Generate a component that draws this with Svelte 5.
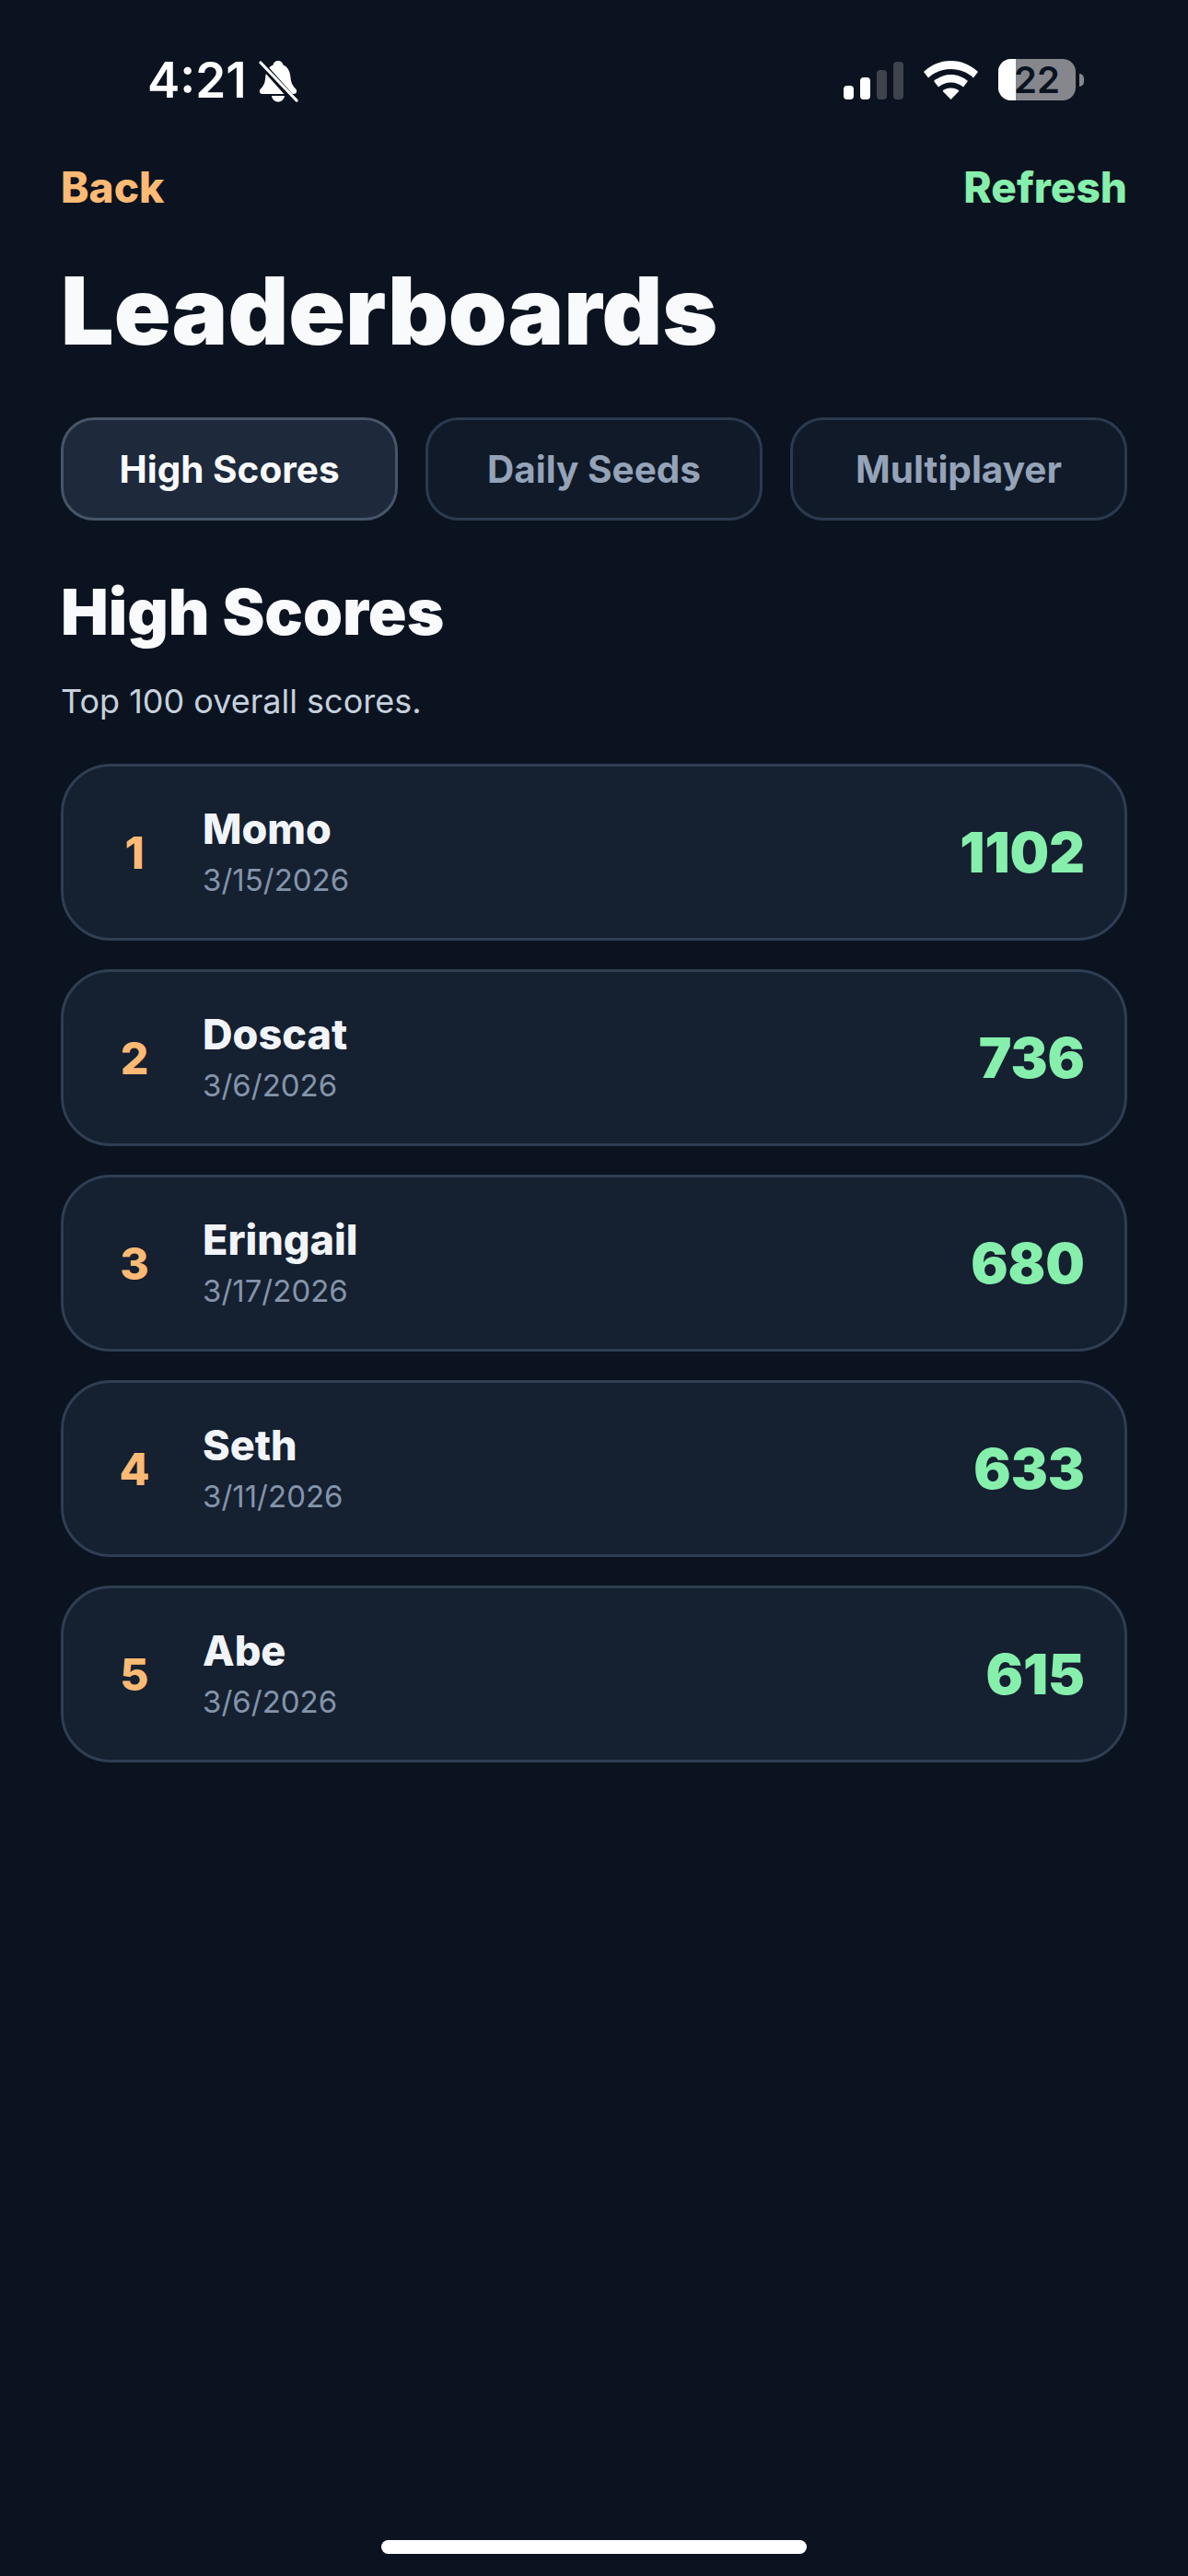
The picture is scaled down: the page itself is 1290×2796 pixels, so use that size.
<script>
  const rows = [
    { rank: 1, name: 'Momo', date: '3/15/2026', score: 1102 },
    { rank: 2, name: 'Doscat', date: '3/6/2026', score: 736 },
    { rank: 3, name: 'Eringail', date: '3/17/2026', score: 680 },
    { rank: 4, name: 'Seth', date: '3/11/2026', score: 633 },
    { rank: 5, name: 'Abe', date: '3/6/2026', score: 615 }
  ];
  const tabs = ['High Scores', 'Daily Seeds', 'Multiplayer'];
</script>

<div class="page">
  <header class="status">
    <div class="left">
      <span class="time">4:21</span>
      <svg class="bell" width="44" height="46" viewBox="0 0 44 46">
        <path fill="#fff" d="M22 1c3 0 5 2 5.500 4.500C33 8 35 13 35.500 19c.4 6 2.500 9 6 13 1.500 2 .5 5-2.500 5H5c-3 0-4-3-2.500-5 3-3 5-6 5.500-11C8.500 13 11 8 16.500 5.500 17 3 19 1 22 1z"/>
        <path fill="#fff" d="M15 39h14c-.5 4-3.500 6.500-7 6.500S15.500 43 15 39z"/>
        <path stroke="#0b1320" stroke-width="7" d="M-1 -1 L42 47"/>
        <path stroke="#fff" stroke-width="3.200" stroke-linecap="round" d="M3 3 L42 44"/>
      </svg>
    </div>
    <div class="right">
      <svg class="signal" width="65" height="41" viewBox="0 0 65 41">
        <rect x="0" y="26" width="11" height="15" rx="4" fill="#fff"/>
        <rect x="18" y="17" width="11" height="24" rx="4" fill="#fff"/>
        <rect x="36" y="9" width="11" height="32" rx="4" fill="#3e434c"/>
        <rect x="54" y="0" width="11" height="41" rx="4" fill="#3e434c"/>
      </svg>
      <svg class="wifi" width="59" height="42" viewBox="0 0 59 42">
        <path fill="#fff" d="M29.500 0C41 0 51 4.500 59 12l-5 6.500C47.500 12.500 39 9 29.500 9S11.500 12.500 5 18.500L0 12C8 4.500 18 0 29.500 0z"/>
        <path fill="#fff" d="M29.500 15c7 0 13.500 2.700 18.500 7l-5 6.500c-3.500-3-8-5-13.500-5S19.500 25.500 16 28.500L11 22c5-4.300 11.500-7 18.500-7z"/>
        <path fill="#fff" d="M29.500 29.500c3.500 0 6.500 1.200 9 3.200L29.500 42l-9-9.300c2.500-2 5.500-3.200 9-3.200z"/>
      </svg>
      <div class="battery">
        <div class="cell"><span class="charge"></span><span class="pct">22</span></div>
        <span class="nub"></span>
      </div>
    </div>
  </header>

  <nav class="topnav">
    <span class="back">Back</span>
    <span class="refresh">Refresh</span>
  </nav>

  <h1>Leaderboards</h1>

  <div class="tabs">
    {#each tabs as tab, i}
      <div class="tab" class:active={i === 0}>{tab}</div>
    {/each}
  </div>

  <h2>High Scores</h2>
  <p class="sub">Top 100 overall scores.</p>

  <div class="list">
    {#each rows as row}
      <div class="card">
        <span class="rank">{row.rank}</span>
        <div class="who">
          <span class="name">{row.name}</span>
          <span class="date">{row.date}</span>
        </div>
        <span class="score">{row.score}</span>
      </div>
    {/each}
  </div>

  <div class="home"></div>
</div>

<style>
  :global(body) {
    margin: 0;
    background: #0b1320;
  }
  .page {
    box-sizing: border-box;
    width: 1290px;
    height: 2796px;
    padding: 0 66px;
    display: flex;
    flex-direction: column;
    background: #0b1320;
    font-family: Inter, "Liberation Sans", sans-serif;
    color: #f8fafc;
  }
  .status {
    padding-top: 64px;
    height: 47px;
    display: flex;
    justify-content: space-between;
    align-items: flex-start;
    margin: 0 -66px;
  }
  .left {
    display: flex;
    align-items: flex-start;
    margin-left: 160px;
    gap: 12px;
  }
  .time {
    font-size: 53px;
    font-weight: 600;
    line-height: 47px;
    color: #fff;
  }
  .bell { margin-top: 1px; }
  .right {
    display: flex;
    align-items: center;
    margin-right: 113px;
    gap: 22px;
  }
  .signal { margin-top: 2px; }
  .battery {
    display: flex;
    align-items: center;
    gap: 4px;
  }
  .cell {
    position: relative;
    width: 84px;
    height: 45px;
    border-radius: 14px;
    background: #85878d;
    display: flex;
    align-items: center;
    justify-content: center;
  }
  .charge {
    position: absolute;
    left: 0;
    top: 0;
    bottom: 0;
    width: 19px;
    border-radius: 14px 0 0 14px;
    background: #fff;
  }
  .pct {
    position: relative;
    font-size: 40px;
    font-weight: 600;
    line-height: 1;
    color: #0b1320;
  }
  .nub {
    width: 5px;
    height: 14px;
    border-radius: 0 5px 5px 0;
    background: #85878d;
  }
  .topnav {
    display: flex;
    justify-content: space-between;
    margin-top: 65px;
    font-size: 46px;
    font-weight: 800;
    line-height: 54px;
  }
  .back { color: #fdba74; }
  .refresh { color: #86efac; }
  h1 {
    margin: 47px 0 0;
    font-size: 102px;
    font-weight: 900;
    line-height: 120px;
  }
  .tabs {
    display: grid;
    grid-template-columns: repeat(3, 1fr);
    gap: 30px;
    margin-top: 56px;
  }
  .tab {
    box-sizing: border-box;
    height: 112px;
    border: 3px solid #2b3a4f;
    border-radius: 36px;
    background: #111a29;
    color: #94a3b8;
    font-size: 40.500px;
    font-weight: 750;
    display: flex;
    align-items: center;
    justify-content: center;
  }
  .tab.active {
    background: #1e293b;
    border-color: #475569;
    color: #f8fafc;
  }
  h2 {
    margin: 57px 0 0;
    font-size: 69px;
    font-weight: 900;
    line-height: 84px;
  }
  .sub {
    margin: 31px 0 0;
    font-size: 36px;
    line-height: 48px;
    color: #c6d1de;
  }
  .list {
    display: flex;
    flex-direction: column;
    gap: 31px;
    margin-top: 44px;
  }
  .card {
    box-sizing: border-box;
    height: 192px;
    border: 3px solid #2f3e53;
    border-radius: 54px;
    background: #152031;
    padding: 0 43px 0 46px;
    display: flex;
    align-items: center;
    gap: 43px;
  }
  .rank {
    width: 62px;
    text-align: center;
    font-size: 48px;
    font-weight: 800;
    color: #fdba74;
  }
  .who {
    flex: 1;
    display: flex;
    flex-direction: column;
    gap: 10px;
  }
  .name {
    font-size: 45px;
    font-weight: 800;
    line-height: 50px;
    color: #f1f5f9;
  }
  .date {
    font-size: 33px;
    line-height: 40px;
    color: #8494aa;
  }
  .score {
    font-size: 60px;
    font-weight: 900;
    color: #86efac;
  }
  .home {
    width: 462px;
    height: 15px;
    border-radius: 8px;
    background: #fff;
    margin: auto auto 24px;
  }
</style>
